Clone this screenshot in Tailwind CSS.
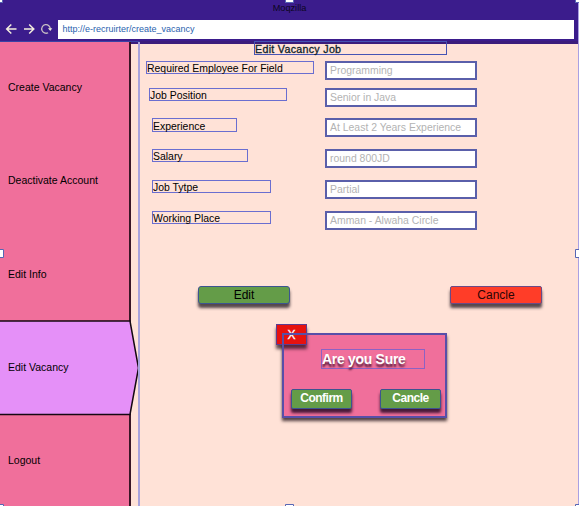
<!DOCTYPE html>
<html lang="en">
<head>
<meta charset="utf-8">
<title>Edit Vacancy Job</title>
<script src="https://cdn.jsdelivr.net/npm/@tailwindcss/browser@4"></script>
</head>
<body class="font-['Liberation_Sans',Arial,sans-serif] text-black">
<div class="relative flex h-[506px] w-[579px] flex-col overflow-hidden bg-[#ffe2d7]">
  <header class="flex h-[41px] shrink-0 flex-col bg-[#3b1c8c]">
    <div class="h-5 pt-[2px] text-center text-[9.200px] leading-[12px] text-[#0c0620]">Moqzilla</div>
    <div class="flex h-[19px] items-center pr-[5px]">
      <svg class="h-[19px] w-[58px] shrink-0" viewBox="0 0 58 19" fill="none" stroke="#f3eedd" stroke-width="1.5">
        <path d="M16.500 9H6.700M11.300 4.500L6.700 9l4.600 4.500M24 9h9.800M29.200 4.500L33.800 9l-4.600 4.500"/>
        <path stroke="#c9bfc4" stroke-width="1.300" d="M50.300 9a4.300 4.300 0 1 0-2.200 3.700"/>
        <path fill="#e9e2d8" stroke="none" d="M47.900 8.200h4.400l-2 2.800z"/>
      </svg>
      <div class="h-[19px] grow bg-white pl-[4.500px] text-[9px] leading-[18px] text-[#2a5fae]">http://e-recruirter/create_vacancy</div>
    </div>
  </header>

  <div class="flex grow">
    <nav class="flex w-[131px] shrink-0 flex-col border-r-2 border-[#3a1626] bg-[#f06f9b] text-[10.500px]">
      <div class="flex h-[93px] items-center pl-2">Create Vacancy</div>
      <div class="flex h-[93px] items-center pl-2">Deactivate Account</div>
      <div class="flex h-[94px] items-center pt-[2px] pl-2">Edit Info</div>
      <div class="relative flex h-[93px] items-center pl-2">
        <svg class="absolute -top-px left-0 h-[96px] w-[141px] max-w-none" viewBox="0 0 141 96">
          <path d="M-3 1H130L138.500 48L130 94.500H-3Z" fill="#e590f8" stroke="#140812" stroke-width="1.500"/>
        </svg>
        <span class="relative">Edit Vacancy</span>
      </div>
      <div class="flex h-[93px] items-center pl-2">Logout</div>
    </nav>

    <main class="flex grow flex-col border-t-[3px] border-[#3b1c7c]">
      <h1 class="relative -mt-[3px] ml-[123px] h-[14px] w-[193px] border border-[#4654b4] text-[10.670px] leading-[14px] font-normal tracking-[0.300px] text-[#0c1f2b] [-webkit-text-stroke:0.300px_#0c1f2b]">Edit Vacancy Job</h1>
      <form class="mt-[6px] ml-[15px] grid grid-cols-[179px_152px] grid-rows-[27px_30px_31px_31px_31px_19px] items-start text-[10.450px] leading-[13px] whitespace-nowrap">
        <label class="h-[13px] w-[168px] border border-[#6a6ed0]">Required Employee For Field</label>
        <div class="h-[19px] border-2 border-[#5a5faa] bg-white pl-[3px] leading-[15px] text-[#b3b3b3]">Programming</div>
        <label class="ml-[3px] h-[13px] w-[138px] border border-[#6a6ed0]">Job Position</label>
        <div class="h-[19px] border-2 border-[#5a5faa] bg-white pl-[3px] leading-[15px] text-[#b3b3b3]">Senior in Java</div>
        <label class="ml-[6px] h-[14px] w-[85px] border border-[#6a6ed0] leading-[15px]">Experience</label>
        <div class="h-[19px] border-2 border-[#5a5faa] bg-white pl-[3px] leading-[15px] text-[#b3b3b3]">At Least 2 Years Experience</div>
        <label class="ml-[6px] h-[13px] w-[96px] border border-[#6a6ed0]">Salary</label>
        <div class="h-[19px] border-2 border-[#5a5faa] bg-white pl-[3px] leading-[15px] text-[#b3b3b3]">round 800JD</div>
        <label class="ml-[6px] h-[13px] w-[119px] border border-[#6a6ed0]">Job Tytpe</label>
        <div class="h-[19px] border-2 border-[#5a5faa] bg-white pl-[3px] leading-[15px] text-[#b3b3b3]">Partial</div>
        <label class="ml-[6px] h-[13px] w-[119px] border border-[#6a6ed0]">Working Place</label>
        <div class="h-[19px] border-2 border-[#5a5faa] bg-white pl-[3px] leading-[15px] text-[#b3b3b3]">Amman - Alwaha Circle</div>
      </form>
      <div class="mt-[56px] ml-[67px] flex w-[344px] justify-between text-[12px] leading-[15px]">
        <button class="h-[18px] w-[92px] rounded-[3px] border-[1.500px] border-[#3c5490] bg-[#649c48] shadow-[0_4px_3px_rgba(30,20,30,0.750)]">Edit</button>
        <button class="h-[18px] w-[92px] rounded-[2px] border-[1.500px] border-[#6a4a86] bg-[#ff3d28] text-[#2a0505] shadow-[0_4px_3px_rgba(30,20,30,0.750)]">Cancle</button>
      </div>
    </main>
  </div>

  <section class="absolute top-[333px] left-[282px] flex h-[85px] w-[165px] flex-col bg-[#f06f9b] text-white shadow-[0_3px_3px_rgba(40,25,30,0.800)]">
    <button class="absolute top-[-9px] left-[-6px] h-[21px] w-[31px] border-[1.500px] border-[#5c3c90] bg-[#e6120f] text-[12px] leading-[18px] shadow-[0_4px_3px_rgba(30,10,20,0.700)] [-webkit-text-stroke:0.300px_white]">X</button>
    <div class="pointer-events-none absolute inset-0 border-2 border-[#584fa8]"></div>
    <h2 class="mt-4 ml-[39px] h-5 w-[104px] border border-[#8c62c4] text-[14px] leading-[19px] font-bold tracking-[-0.300px] whitespace-nowrap [text-shadow:0_3px_2px_rgba(50,10,40,0.800)]">Are you Sure</h2>
    <div class="mt-5 ml-[9px] flex w-[150px] justify-between text-[12px] leading-[15px] font-bold tracking-[-0.500px]">
      <button class="h-5 w-[61px] rounded-[2px] border-[1.500px] border-[#3c5490] bg-[#649c48] pb-[2px] shadow-[0_4px_3px_rgba(40,10,40,0.850)]">Confirm</button>
      <button class="h-5 w-[61px] rounded-[2px] border-[1.500px] border-[#3c5490] bg-[#649c48] pb-[2px] shadow-[0_4px_3px_rgba(40,10,40,0.850)]">Cancle</button>
    </div>
  </section>

  <!-- selection outlines and resize handles -->
  <svg class="pointer-events-none absolute inset-0 h-[506px] w-[579px]" viewBox="0 0 579 506" fill="none">
    <path d="M139 42V506" stroke="#a9a3dc" stroke-width="2"/>
    <path d="M0 41.500H139.500" stroke="#3a43a4"/>
    <path d="M578.500 0V506" stroke="#aaa0e2"/>
    <g fill="white" stroke="#5666b4">
      <path d="M-5.500-5.500h8v8h-8zM285.500-5.500h8v8h-8zM575.500-5.500h8v8h-8zM-5.500 249.500h9v8h-9zM575.500 249.500h8v8h-8zM-5.500 504.500h9v8h-9zM285.500 504.500h8v8h-8zM575.500 504.500h8v8h-8z"/>
    </g>
  </svg>
</div>
</body>
</html>
